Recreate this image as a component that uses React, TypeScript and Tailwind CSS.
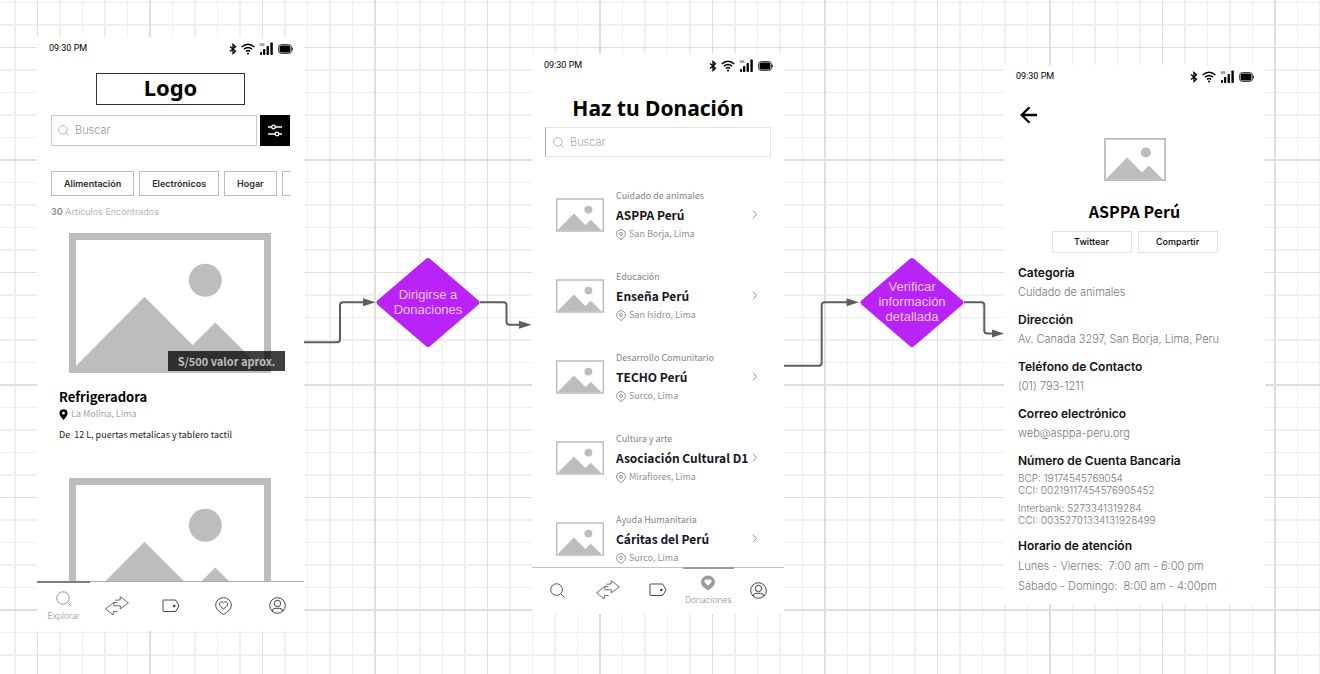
import type { ReactNode } from "react";

const SOURCE = "font-['Noto_Sans_CJK_JP','Noto_Sans',sans-serif]";

const GRID_OFFSETS = [
  { at: 23, size: 1 },
  { at: 45, size: 2 },
  { at: 68, size: 1 },
  { at: 90, size: 2 },
  { at: 135, size: 2 },
  { at: 158, size: 1 },
  { at: 180, size: 2 },
  { at: 203, size: 1 },
  { at: 0, size: 2, major: true },
  { at: 113, size: 1, major: true },
];

function GridPaper() {
  return (
    <svg className="absolute inset-0 h-full w-full" aria-hidden="true">
      <defs>
        <pattern id="grid" x="149" y="159" width="225" height="225" patternUnits="userSpaceOnUse">
          {GRID_OFFSETS.map((g) => (
            <g key={g.at} fill={g.major ? "#dfdfdf" : "#efefef"}>
              <rect x={g.at} y="0" width={g.size} height="225" />
              <rect x="0" y={g.at} width="225" height={g.size} />
            </g>
          ))}
        </pattern>
      </defs>
      <rect width="100%" height="100%" fill="url(#grid)" />
    </svg>
  );
}

function Connectors() {
  return (
    <svg className="absolute top-0 left-0" width="1320" height="674" aria-hidden="true">
      <g fill="none" stroke="#5e5e5e" strokeWidth="2">
        <path d="M304 342.3H337Q340 342.3 340 339.3V305.3Q340 302.3 343 302.3H364" />
        <path d="M480 302.3H503.5Q506.5 302.3 506.5 305.3V321.7Q506.5 324.7 509.5 324.7H520" />
        <path d="M784 365.8H818.7Q821.7 365.8 821.7 362.8V305.3Q821.7 302.3 824.7 302.3H847" />
        <path d="M964 302.3H981.3Q984.3 302.3 984.3 305.3V330.6Q984.3 333.6 987.3 333.6H993" />
      </g>
      <g fill="#5e5e5e">
        <path d="M375.500 302.300L363 298.300V306.300Z" />
        <path d="M531.500 324.700L519 320.700V328.700Z" />
        <path d="M859 302.300L846.500 298.300V306.300Z" />
        <path d="M1004 333.600L992 329.600V337.600Z" />
      </g>
    </svg>
  );
}

function Picture({ className, frame }: { className: string; frame: number }) {
  const b = 140 - frame;
  return (
    <svg viewBox="0 0 202 140" className={className} role="img" aria-label="Imagen">
      <path
        fillRule="evenodd"
        fill="#bcbdbf"
        d={`M0 0H202V140H0ZM${frame} ${frame}V${b}H${202 - frame}V${frame}Z`}
      />
      <circle cx="136.300" cy="47.300" r="16.500" fill="#bcbdbf" />
      <path fill="#bcbdbf" d="M5 135L75.500 63.700L123.700 112L146.300 89.500L192 135Z" />
    </svg>
  );
}

function StatusBar() {
  return (
    <div className="flex h-[23px] shrink-0 items-center justify-between pr-[11px] pl-3">
      <span className="font-[Roboto,sans-serif] text-[9px] leading-none text-black">09:30 PM</span>
      <div className="flex items-center gap-1">
        <svg width="8" height="12" viewBox="0 0 8 12" fill="none" stroke="#000" strokeWidth="1.300">
          <path d="M1 3.500L6.500 8.200L4 10.500V1.500L6.500 3.800L1 8.500" />
        </svg>
        <svg width="14" height="12" viewBox="0 0 14 12" fill="none" stroke="#000" strokeWidth="1.400">
          <path d="M0.600 4Q7-1.500 13.400 4M2.800 6.300Q7 2.700 11.200 6.300M4.900 8.500Q7 6.700 9.100 8.500" />
          <circle cx="7" cy="10.500" r="1" fill="#000" stroke="none" />
        </svg>
        <svg width="15" height="13" viewBox="0 0 15 13" fill="#000">
          <text x="0.500" y="3.800" fontSize="4" fontFamily="Roboto, sans-serif">5G</text>
          <rect x="1" y="10" width="2" height="3" rx="0.800" />
          <rect x="4" y="7" width="2.300" height="6" rx="0.800" />
          <rect x="7.600" y="4" width="2.300" height="9" rx="0.800" />
          <rect x="11.400" y="0.500" width="2.400" height="12.500" rx="0.800" />
        </svg>
        <svg width="15" height="10" viewBox="0 0 15 10" fill="none">
          <rect x="0.600" y="0.600" width="12.800" height="8.800" rx="2.600" stroke="#333" />
          <rect x="1.600" y="1.600" width="10.800" height="6.800" rx="1.500" fill="#000" />
          <path d="M14 3V7Q15 6 15 5T14 3Z" fill="#333" />
        </svg>
      </div>
    </div>
  );
}

function SearchIcon({ className }: { className: string }) {
  return (
    <svg viewBox="0 0 16 16" className={className} fill="none" stroke="currentColor" aria-hidden="true">
      <circle cx="7" cy="7" r="6.200" />
      <path d="M11.400 11.400L15.300 15.300" />
    </svg>
  );
}

function SwapIcon() {
  return (
    <svg
      width="24"
      height="20"
      viewBox="0 0 24 20"
      fill="none"
      stroke="#5a5a5a"
      strokeWidth="0.900"
      strokeLinejoin="round"
      aria-hidden="true"
    >
      <path d="M12.500 15.600H8.400L8.200 19L0.600 12.900L8.900 6.300V9.800H15.300V12.900L23.400 6.800L15.200 0.800V3.900L10.200 4.300" />
      <path d="M8.900 6.300L12.500 6.700" />
    </svg>
  );
}

function TagIcon() {
  return (
    <svg width="18" height="14" viewBox="0 0 18 14" fill="none" stroke="#4a4a4a" aria-hidden="true">
      <path d="M1 1.500Q1 1 1.500 1H13L14 1.500L17 7L14 12L13 12.500H1.500Q1 12.500 1 12Z" />
      <circle cx="12.300" cy="7" r="1.200" fill="#333" stroke="none" />
    </svg>
  );
}

function HeartPinIcon({ filled = false }: { filled?: boolean }) {
  const pin = "M8.500 17.500C4 14.600 0.700 12 0.700 8A7.800 7.400 0 0 1 16.300 8C16.300 12 13 14.600 8.500 17.500Z";
  const heart = "M8.500 12.200L4.700 8.200A2.200 2.200 0 0 1 8.500 5.900A2.200 2.200 0 0 1 12.300 8.200Z";
  return (
    <svg
      viewBox="0 0 17 18"
      className={filled ? "h-4 w-4" : "h-[18px] w-[17px]"}
      fill={filled ? "#9b9b9b" : "none"}
      stroke={filled ? "none" : "#4a4a4a"}
      strokeLinejoin="round"
      aria-hidden="true"
    >
      <path d={pin} />
      <path d={heart} fill={filled ? "#fff" : "none"} />
    </svg>
  );
}

function UserIcon() {
  return (
    <svg width="17" height="17" viewBox="0 0 17 17" fill="none" stroke="#3f3f3f" aria-hidden="true">
      <circle cx="8.500" cy="8.500" r="7.800" />
      <circle cx="8.500" cy="6.500" r="3.200" />
      <path d="M3.200 14Q3.500 11.500 6.200 11.300H10.800Q13.500 11.500 13.800 14" />
    </svg>
  );
}

function PinOutline() {
  return (
    <svg width="10" height="11" viewBox="0 0 10 11" fill="none" stroke="#8d9199" aria-hidden="true">
      <path d="M5 10.500C2.500 8.800 0.600 7.300 0.600 4.900A4.400 4.300 0 0 1 9.400 4.900C9.400 7.300 7.500 8.800 5 10.500Z" />
      <circle cx="5" cy="4.900" r="1.500" />
    </svg>
  );
}

function NavItem({ label, children }: { label: string; children: ReactNode }) {
  return (
    <a href="#" aria-label={label} className="flex flex-1 items-center justify-center pb-[2px]">
      {children}
    </a>
  );
}

function ActiveNavItem({ label, tone, children }: { label: string; tone: string; children: ReactNode }) {
  return (
    <a href="#" className="relative flex flex-1 flex-col items-center justify-center gap-1 pb-[2px]">
      <span className={`absolute inset-x-0 -top-px h-0.5 ${tone}`} />
      {children}
      <span className="font-[Roboto,sans-serif] text-[9px] leading-[10px] font-light text-[#8a8a8a]">{label}</span>
    </a>
  );
}

function ExploreScreen() {
  return (
    <section className="absolute top-[37px] left-[37px] flex h-[594px] w-[267px] flex-col bg-white">
      <StatusBar />
      <h1 className="mx-auto mt-[13px] flex h-8 w-[149px] items-center justify-center border border-[#333] pb-1 font-['Noto_Sans',sans-serif] text-[22px] leading-none font-bold text-black">
        Logo
      </h1>
      <div className="mt-[10px] flex gap-[3px] px-[14px]">
        <label className="flex h-[31px] min-w-0 flex-1 items-center gap-[6px] border border-[#c8c8c8] px-[6px]">
          <SearchIcon className="h-[11px] w-[11px] shrink-0 text-[#999]" />
          <input
            aria-label="Buscar artículos"
            placeholder="Buscar"
            className="w-full min-w-0 bg-transparent font-[Inter,sans-serif] text-[11px] font-light outline-none placeholder:text-[#999]"
          />
        </label>
        <button aria-label="Filtros" className="flex h-[31px] w-[30px] items-center justify-center bg-black">
          <svg width="14" height="13" viewBox="0 0 14 13" fill="#000" stroke="#fff" strokeWidth="1.300">
            <path d="M0 3H14M0 10H14" />
            <circle cx="5.500" cy="3" r="1.800" />
            <circle cx="9" cy="10" r="1.800" />
          </svg>
        </button>
      </div>
      <div className="mt-[25px] mr-[14px] ml-[14px] flex gap-[5px] overflow-hidden">
        {["Alimentación", "Electrónicos", "Hogar"].map((c) => (
          <button
            key={c}
            className="h-[25px] shrink-0 border border-[#bdbdbd] px-3 font-[Inter,sans-serif] text-[9px] font-semibold text-[#263030]"
          >
            {c}
          </button>
        ))}
        <button aria-label="Más categorías" className="h-[25px] w-20 shrink-0 border border-[#bdbdbd]" />
      </div>
      <p className="mt-[9px] ml-[14px] font-[Inter,sans-serif] text-[9px] leading-[14px] text-[#b5b5b5]">
        <span className="font-semibold text-[#8a8a8a]">30</span> Artículos Encontrados
      </p>
      <div className="min-h-0 flex-1 overflow-hidden">
        <article className="mt-[14px]">
          <div className="relative mr-[33px] ml-8">
            <Picture className="block h-auto w-full" frame={7} />
            <span
              className={`absolute -right-[14px] bottom-0.5 flex h-5 w-[117px] items-center justify-center bg-black/75 text-[11px] leading-none font-bold text-[#bcbdbf] ${SOURCE}`}
            >
              S/500 valor aprox.
            </span>
          </div>
          <div className={`mt-[14px] ml-[22px] ${SOURCE}`}>
            <h2 className="text-[13px] leading-5 font-bold text-black">Refrigeradora</h2>
            <p className="flex items-center gap-[3px] text-[9px] leading-[14px] text-[#a6a6a6]">
              <svg width="9" height="11" viewBox="0 0 9 11" aria-hidden="true">
                <path
                  fill="#000"
                  fillRule="evenodd"
                  d="M4.500 11C1.500 7.500 0.500 6 0.500 4.200A4 4 0 0 1 8.500 4.200C8.500 6 7.500 7.500 4.500 11ZM4.500 2.800A1.400 1.400 0 1 0 4.500 5.600A1.400 1.400 0 1 0 4.500 2.800Z"
                />
              </svg>
              La Molina, Lima
            </p>
            <p className="mt-[7px] text-[9px] leading-[14px] whitespace-pre text-[#222]">
              {"De  12 L, puertas metalicas y tablero tactil"}
            </p>
          </div>
        </article>
        <article className="mt-9 mr-[33px] ml-8">
          <Picture className="block h-auto w-full" frame={7} />
        </article>
      </div>
      <nav className="flex h-[50px] shrink-0 border-t border-[#aaa]">
        <ActiveNavItem label="Explorar" tone="bg-[#7d7d7d]">
          <SearchIcon className="h-4 w-4 text-[#999]" />
        </ActiveNavItem>
        <NavItem label="Intercambios"><SwapIcon /></NavItem>
        <NavItem label="Ofertas"><TagIcon /></NavItem>
        <NavItem label="Donaciones"><HeartPinIcon /></NavItem>
        <NavItem label="Perfil"><UserIcon /></NavItem>
      </nav>
    </section>
  );
}

const CHARITIES = [
  { kind: "Cuidado de animales", name: "ASPPA Perú", place: "San Borja, Lima" },
  { kind: "Educación", name: "Enseña Perú", place: "San Isidro, Lima" },
  { kind: "Desarrollo Comunitario", name: "TECHO Perú", place: "Surco, Lima" },
  { kind: "Cultura y arte", name: "Asociación Cultural D1", place: "Miraflores, Lima" },
  { kind: "Ayuda Humanitaria", name: "Cáritas del Perú", place: "Surco, Lima" },
];

function DonateScreen() {
  return (
    <section className="absolute top-[54px] left-[532px] flex h-[560px] w-[252px] flex-col bg-white">
      <StatusBar />
      <h1 className="mt-[17px] text-center font-['Noto_Sans',sans-serif] text-[21px] leading-7 font-bold text-black">
        Haz tu Donación
      </h1>
      <label className="mt-[5px] mr-[13px] ml-[13px] flex h-[30px] shrink-0 items-center gap-[6px] border border-[#e6e6e6] border-l-[#aaa] px-[7px]">
        <SearchIcon className="h-[11px] w-[11px] shrink-0 text-[#999]" />
        <input
          aria-label="Buscar donación"
          placeholder="Buscar"
          className="w-full min-w-0 bg-transparent font-[Inter,sans-serif] text-[11px] font-light outline-none placeholder:text-[#aaa]"
        />
      </label>
      <ul className={`mt-[31px] min-h-0 flex-1 overflow-hidden ${SOURCE}`}>
        {CHARITIES.map((c) => (
          <li key={c.name} className="flex h-[81px] items-start pr-[26px] pl-6">
            <Picture className="mt-[10px] h-[34px] w-12 shrink-0" frame={6} />
            <div className="ml-3 min-w-0 flex-1 whitespace-nowrap">
              <p className="text-[9px] leading-4 text-[#7f838c]">{c.kind}</p>
              <h2 className="mt-px text-[12px] leading-5 font-bold text-[#15151f]">{c.name}</h2>
              <p className="flex items-center gap-[3px] text-[9px] leading-[18px] text-[#8d9199]">
                <PinOutline />
                {c.place}
              </p>
            </div>
            <svg width="6" height="9" viewBox="0 0 6 9" className="mt-[22px] shrink-0" fill="none" stroke="#8f8f8f">
              <path d="M1 0.700L4.500 4.500L1 8.300" />
            </svg>
          </li>
        ))}
      </ul>
      <nav className="flex h-[47px] shrink-0 border-t border-[#c4c4c4]">
        <NavItem label="Explorar"><SearchIcon className="h-[15px] w-[15px] text-[#444]" /></NavItem>
        <NavItem label="Intercambios"><SwapIcon /></NavItem>
        <NavItem label="Ofertas"><TagIcon /></NavItem>
        <ActiveNavItem label="Donaciones" tone="bg-[#9b9b9b]"><HeartPinIcon filled /></ActiveNavItem>
        <NavItem label="Perfil"><UserIcon /></NavItem>
      </nav>
    </section>
  );
}

function Field({ title, children }: { title: string; children: ReactNode }) {
  return (
    <div>
      <dt className="text-[12px] leading-5 font-semibold text-[#111]">{title}</dt>
      <dd className="font-light">{children}</dd>
    </div>
  );
}

function DetailScreen() {
  return (
    <section className="absolute top-[65px] left-[1004px] flex h-[539px] w-[261px] flex-col bg-white font-[Inter,sans-serif]">
      <StatusBar />
      <button aria-label="Volver" className="mt-[18px] ml-4 flex h-[18px] w-[18px] items-center justify-center">
        <svg width="18" height="18" viewBox="0 0 18 18" fill="none" stroke="#000" strokeWidth="2.300">
          <path d="M17 9H2M9.500 1.200L1.700 9L9.500 16.800" />
        </svg>
      </button>
      <Picture className="mx-auto mt-[14px] h-[43px] w-[62px] shrink-0" frame={6} />
      <h1 className={`mt-[18px] text-center text-[16px] leading-6 font-bold text-black ${SOURCE}`}>ASPPA Perú</h1>
      <div className="mt-2 flex justify-center gap-[6px]">
        <button className="h-[22px] w-20 border border-[#e2e2e2] text-[9px] font-medium text-black">Twittear</button>
        <button className="h-[22px] w-20 border border-[#e2e2e2] text-[9px] font-medium text-black">Compartir</button>
      </div>
      <dl className="mt-[10px] flex flex-col gap-[9px] pl-[14px] text-[11px] leading-[18px] whitespace-nowrap text-[#777]">
        <Field title="Categoría">Cuidado de animales</Field>
        <Field title="Dirección">Av. Canada 3297, San Borja, Lima, Peru</Field>
        <Field title="Teléfono de Contacto">(01) 793-1211</Field>
        <Field title="Correo electrónico">web@asppa-peru.org</Field>
        <Field title="Número de Cuenta Bancaria">
          <div className="flex flex-col gap-[6px] py-px text-[10px] leading-3">
            <p>BCP: 19174545769054<br />CCI: 00219117454576905452</p>
            <p>Interbank: 5273341319284<br />CCI: 00352701334131928499</p>
          </div>
        </Field>
        <Field title="Horario de atención">
          <div className="leading-5 whitespace-pre">
            <p>{"Lunes - Viernes:  7:00 am - 6:00 pm"}</p>
            <p>{"Sábado - Domingo:  8:00 am - 4:00pm"}</p>
          </div>
        </Field>
      </dl>
    </section>
  );
}

function Decision({ place, lines }: { place: string; lines: string[] }) {
  return (
    <div className={`absolute top-[257px] grid h-[91px] w-[106px] place-items-center ${place}`}>
      <svg viewBox="0 0 106 91" className="col-start-1 row-start-1 h-full w-full" aria-hidden="true">
        <path
          d="M53 3.500L102 45.500L53 87.500L4 45.500Z"
          fill="#b923f8"
          stroke="#b923f8"
          strokeWidth="5"
          strokeLinejoin="round"
        />
      </svg>
      <p className="z-10 col-start-1 row-start-1 pb-[2px] text-center font-['Liberation_Sans',sans-serif] text-[13px] leading-[15px] text-[#edc8fd]">
        {lines.map((l) => (
          <span key={l} className="block">{l}</span>
        ))}
      </p>
    </div>
  );
}

export default function App() {
  return (
    <main className="relative min-h-screen w-full overflow-hidden bg-white">
      <GridPaper />
      <Connectors />
      <ExploreScreen />
      <Decision place="left-[375px]" lines={["Dirigirse a", "Donaciones"]} />
      <DonateScreen />
      <Decision place="left-[859px]" lines={["Verificar", "información", "detallada"]} />
      <DetailScreen />
    </main>
  );
}
